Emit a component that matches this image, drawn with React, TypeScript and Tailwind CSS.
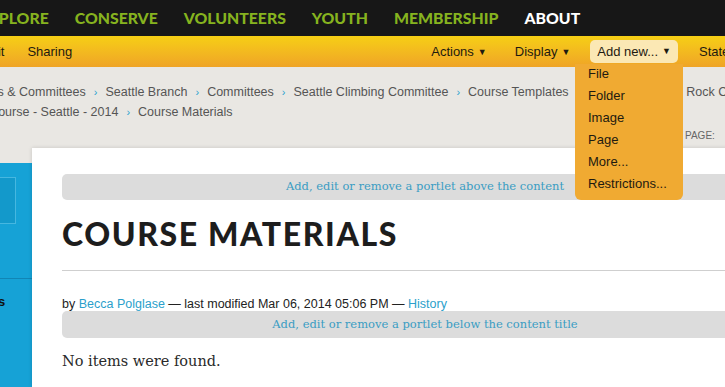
import React from 'react';

const navItems = ['EXPLORE', 'CONSERVE', 'VOLUNTEERS', 'YOUTH', 'MEMBERSHIP'];
const addItems = ['File', 'Folder', 'Image', 'Page', 'More...', 'Restrictions...'];
const crumbs1 = [
  'Branches & Committees',
  'Seattle Branch',
  'Committees',
  'Seattle Climbing Committee',
  'Course Templates',
  'Multi-pitch Alpine Rock Climbing',
];
const crumbs2 = ['Basic Climbing Course - Seattle - 2014', 'Course Materials'];

function Crumbs({ items }: { items: string[] }) {
  return (
    <>
      {items.map((c, i) => (
        <React.Fragment key={c}>
          {i > 0 && <span className="mx-[8px] text-[11px] text-[#2aa3cf]">›</span>}
          <span>{c}</span>
        </React.Fragment>
      ))}
    </>
  );
}

function Caret() {
  return <span className="ml-[4px] text-[9px] align-[1px]">▼</span>;
}

export default function App() {
  const sans = "font-['Liberation_Sans',Arial,sans-serif]";
  return (
    <div className="relative w-[725px] h-[387px] overflow-hidden bg-[#e9e7e3]">
      {/* top navigation */}
      <div className="h-9 bg-[#171717] flex items-center whitespace-nowrap font-['Lato',sans-serif] font-black text-[15.8px]">
        <div className="ml-[-21px] flex gap-[26px]">
          {navItems.map((n) => (
            <span key={n} className="text-[#86b31f]">{n}</span>
          ))}
          <span className="text-white">ABOUT</span>
        </div>
      </div>

      {/* edit bar */}
      <div className={`h-[31px] bg-gradient-to-b from-[#f6cf14] to-[#efa426] flex items-center whitespace-nowrap text-[13px] text-[#1e1a10] ${sans}`}>
        <span className="ml-[-18px]">Edit</span>
        <span className="ml-[23px]">Sharing</span>
        <span className="ml-[359px]">Actions<Caret /></span>
        <span className="ml-[28px]">Display<Caret /></span>
        <span className="ml-[20px] h-[23px] flex items-center rounded-[5px] bg-[#fbe8b4] px-[7px]">Add new...<Caret /></span>
        <span className="ml-[21px]">State</span>
      </div>

      {/* breadcrumbs */}
      <div className={`h-[81px] pt-[15px] text-[12.5px] leading-[20px] text-[#555] whitespace-nowrap ${sans}`}>
        <div className="ml-[-49px]">
          <Crumbs items={crumbs1} />
        </div>
        <div className="ml-[-97px]">
          <Crumbs items={crumbs2} />
        </div>
        <div className="mt-[4px] ml-[685px] text-[10px] text-[#666]">PAGE:</div>
      </div>

      {/* body */}
      <div className="flex">
        <div className="w-8 flex-none mt-[15px] h-[230px] bg-[#16a2d6] flex flex-col">
          <div className="mt-[14px] w-[16px] h-[47px] border border-l-0 border-[#46b7e0] bg-[#1399cb]" />
          <div className="mt-[54px] h-px bg-[#1185b5]" />
          <div className={`mt-[13px] ml-[-2px] text-[13px] font-bold text-[#111] ${sans}`}>s</div>
        </div>
        <div className="w-[786px] flex-none bg-white px-[30px] h-[239px] shadow-[0_0_4px_rgba(0,0,0,0.15)]">
          <div className="mt-[26px] h-[26px] rounded-[5px] bg-[#dcdcdc] flex items-center justify-center font-['DejaVu_Serif',serif] text-[11.5px] text-[#3a9cc3]">
            Add, edit or remove a portlet above the content
          </div>
          <h1 className="mt-[14px] font-['Lato',sans-serif] font-black text-[32px] leading-[40px] tracking-[1.6px] text-[#1d1d1d]">
            COURSE MATERIALS
          </h1>
          <div className="mt-[16px] h-px bg-[#cfcfcf]" />
          <div className={`mt-[26px] text-[12.5px] leading-[14px] text-[#222] ${sans}`}>
            by <span className="text-[#2b9fcb]">Becca Polglase</span> — last modified Mar 06, 2014 05:06 PM —{' '}
            <span className="text-[#2b9fcb]">History</span>
          </div>
          <div className="h-[27px] rounded-[5px] bg-[#dcdcdc] flex items-center justify-center font-['DejaVu_Serif',serif] text-[11.5px] text-[#3a9cc3]">
            Add, edit or remove a portlet below the content title
          </div>
          <p className="mt-[13px] font-['DejaVu_Serif',serif] text-[14.5px] text-[#2a2a2a]">No items were found.</p>
        </div>
      </div>

      {/* add new dropdown */}
      <div className={`absolute left-[575px] top-[64px] w-[108px] h-[136px] rounded-b-[6px] bg-[#f0aa32] pl-[13px] text-[13px] text-[#1e1a10] ${sans}`}>
        {addItems.map((a) => (
          <div key={a} className="h-[22px] leading-[20px]">{a}</div>
        ))}
      </div>
    </div>
  );
}
